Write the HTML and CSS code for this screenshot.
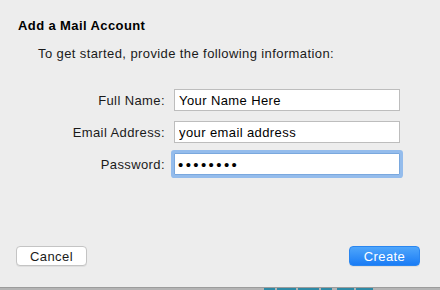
FILE: index.html
```html
<!DOCTYPE html>
<html lang="en">
<head>
  <meta charset="UTF-8" />
  <title>Add a Mail Account</title>
  <link rel="stylesheet" href="styles.css">
</head>
<body>
  <div class="sheet">
    <h1>Add a Mail Account</h1>
    <p class="intro">To get started, provide the following information:</p>

    <form class="fields">
      <label for="name">Full Name:</label>
      <input id="name" type="text" value="Your Name Here">
      <label for="email">Email Address:</label>
      <input id="email" type="text" value="your email address">
      <label for="pass">Password:</label>
      <input id="pass" class="focused" type="password" value="abcdefgh">
    </form>

    <div class="buttons">
      <button class="btn">Cancel</button>
      <button class="btn primary">Create</button>
    </div>
  </div>

  <!-- edge of the window behind the sheet -->
  <div class="behind">
    <span class="tile t1"></span>
    <span class="tile t2"></span>
    <span class="tile t3"></span>
    <span class="tile t4"></span>
    <span class="tile t5"></span>
    <span class="tile t6"></span>
  </div>
</body>
</html>
```

FILE: styles.css
```css
body, html {
  margin: 0;
  padding: 0;
  height: 100%;
  overflow: hidden;
}

body {
  display: flex;
  flex-direction: column;
  background: #ededed;
  font-family: "Liberation Sans", Arial, sans-serif;
  font-size: 13px;
  letter-spacing: 0.4px;
  color: #1a1a1a;
}

.sheet {
  flex: 1;
  padding: 18px 20px 0 18px;
  display: flex;
  flex-direction: column;
}

h1 {
  margin: 0;
  font-size: 13px;
  line-height: 16px;
  font-weight: bold;
  color: #000;
}

.intro {
  margin: 12px 0 0 20px;
  line-height: 16px;
}

.fields {
  display: grid;
  grid-template-columns: 147px 226px;
  column-gap: 9px;
  row-gap: 10px;
  margin-top: 27px;
  align-items: center;
}

.fields label {
  text-align: right;
  padding-top: 1px;
}

.fields input {
  box-sizing: border-box;
  height: 22px;
  margin: 0;
  padding: 1px 4px 0;
  border: 1px solid #bdbdbd;
  border-radius: 0;
  background: #fff;
  font-family: "Liberation Sans", Arial, sans-serif;
  font-size: 13px;
  letter-spacing: 0.4px;
  color: #000;
  outline: none;
}

.fields input.focused {
  border-color: #7aa8de;
  box-shadow: 0 0 0 3px rgba(118, 171, 235, 0.75);
  border-radius: 1px;
  padding: 0 3px;
  font-size: 15px;
  letter-spacing: 2.4px;
}

.buttons {
  display: flex;
  justify-content: space-between;
  margin-top: auto;
  margin-bottom: 21px;
  margin-left: -2px;
}

.btn {
  width: 71px;
  height: 20px;
  padding: 0;
  border: 1px solid #c4c4c4;
  border-radius: 4px;
  background: #fff;
  font-family: "Liberation Sans", Arial, sans-serif;
  font-size: 13px;
  letter-spacing: 0.4px;
  color: #1a1a1a;
  box-shadow: 0 1px 0 rgba(0, 0, 0, 0.06);
}

.btn.primary {
  border-color: #2a86f0;
  background: linear-gradient(to bottom, #4fa6fb, #1a7cf5);
  color: #fff;
}

.behind {
  height: 2px;
  background: #b4b4b4;
  border-top: 1px solid #9c9c9c;
  display: flex;
  padding-left: 264px;
  gap: 2px;
}

.tile {
  height: 2px;
  background: #2e8aa6;
}

.t1 { width: 11px; }
.t2 { width: 19px; }
.t3 { width: 21px; }
.t4 { width: 11px; margin-right: 3px; }
.t5 { width: 17px; }
.t6 { width: 17px; }
```
